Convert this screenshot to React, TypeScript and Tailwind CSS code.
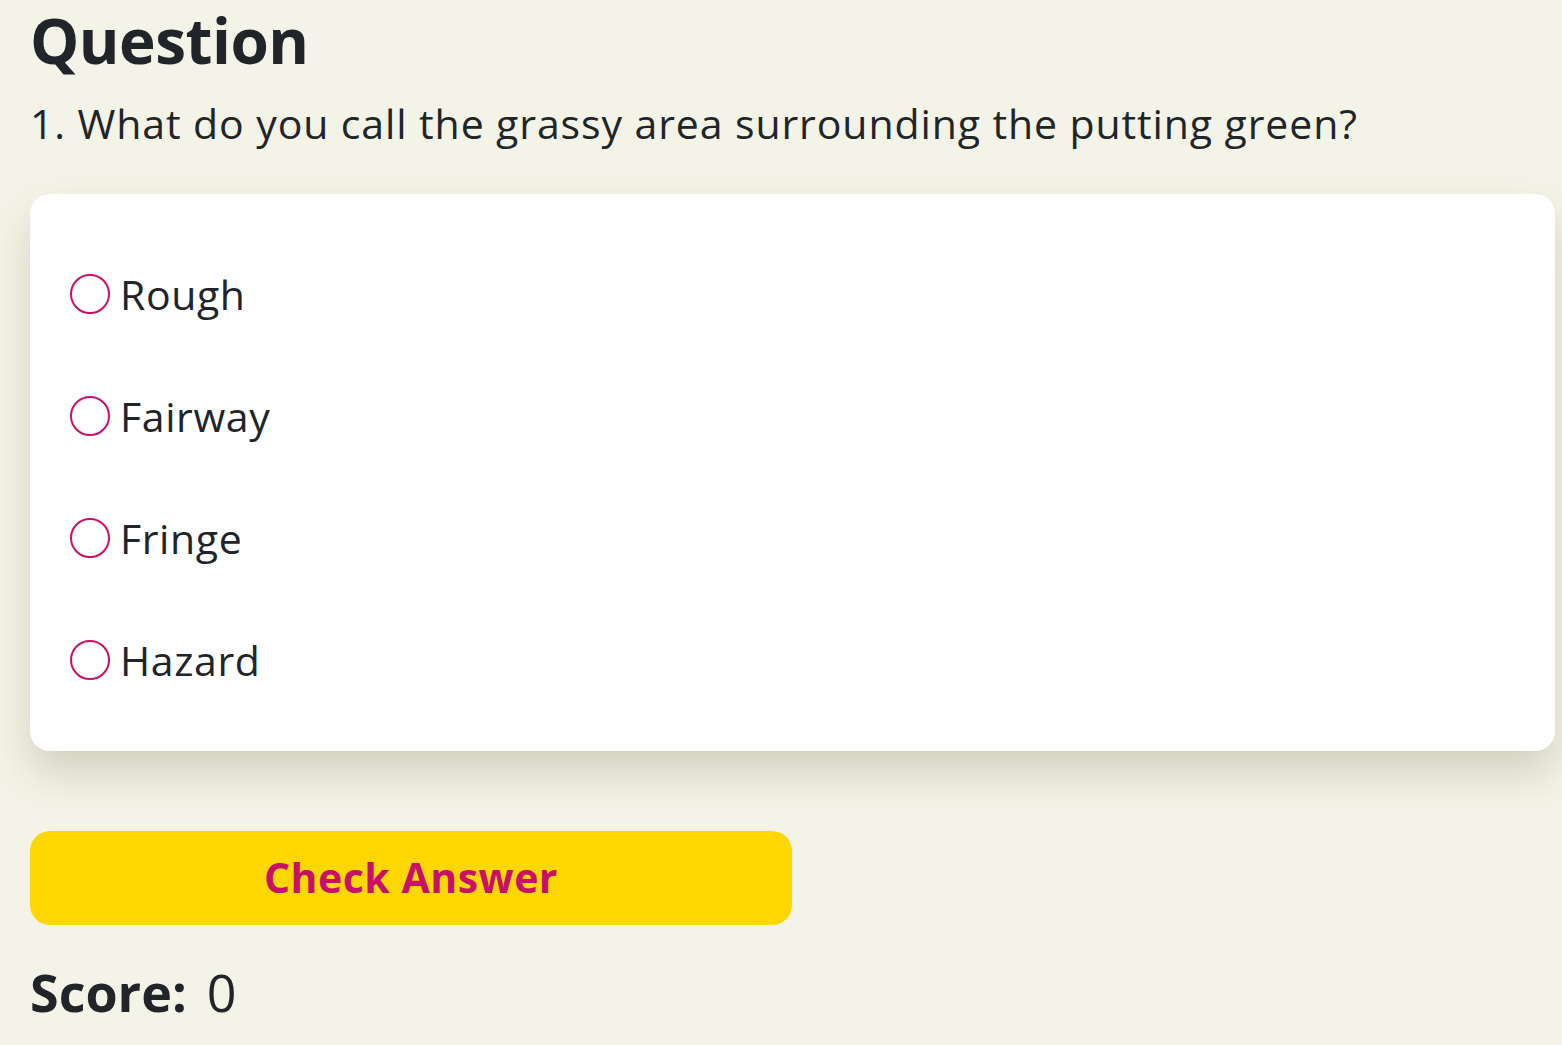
import { useState } from "react";

const OPTIONS = ["Rough", "Fairway", "Fringe", "Hazard"];

export default function App() {
  const [picked, setPicked] = useState<string | null>(null);
  const [score] = useState(0);

  return (
    <div
      className="min-h-screen bg-[#f4f3e7] text-[#212529] pl-[30px] pt-[4px]"
      style={{ fontFamily: '"Open Sans", "Noto Sans", sans-serif' }}
    >
      <h1 className="text-[62px] font-bold leading-[72px] tracking-[-0.5px]">Question</h1>
      <p className="text-[41px] leading-[56px] mt-[19px] tracking-[0.9px]">
        1. What do you call the grassy area surrounding the putting green?
      </p>

      {/* OPTIONS CARD */}
      <div className="mt-[43px] w-[1525px] bg-white rounded-[20px] shadow-[0_22px_40px_rgba(90,90,60,0.22)] pl-[40px] pt-[74px] pb-[65px] flex flex-col gap-[70px]">
        {OPTIONS.map((o) => (
          <label key={o} className="flex items-center gap-[10px] h-[52px] cursor-pointer">
            <span
              onClick={() => setPicked(o)}
              className="w-[40px] h-[40px] rounded-full border-2 border-[#c8106b] flex items-center justify-center"
            >
              {picked === o && <span className="w-[22px] h-[22px] rounded-full bg-[#c8106b]" />}
            </span>
            <span className="text-[41px] leading-[52px] tracking-[0.6px]">{o}</span>
          </label>
        ))}
      </div>

      <button className="mt-[80px] w-[762px] h-[94px] rounded-[20px] bg-[#ffd700] text-[#c8106b] text-[41px] font-bold tracking-[0.5px]">
        Check Answer
      </button>

      <div className="mt-[37px] text-[52px] leading-[60px] flex items-center gap-[20px]">
        <span className="font-bold">Score:</span>
        <span>{score}</span>
      </div>
    </div>
  );
}
